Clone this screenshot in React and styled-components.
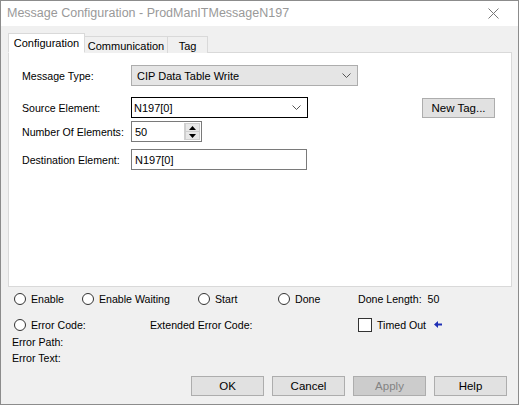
import React from 'react';
import styled, { createGlobalStyle } from 'styled-components';

const GlobalStyle = createGlobalStyle`
  html, body {
    margin: 0;
    padding: 0;
    background: #ffffff;
  }
  body {
    font-family: "Liberation Sans", Arial, sans-serif;
    font-size: 10.6px;
    color: #000;
  }
`;

const Window = styled.div`
  width: 517px;
  height: 403px;
  border: 1px solid #8c8c8c;
  background: #f0f0f0;
  display: flex;
  flex-direction: column;
`;

const TitleBar = styled.div`
  height: 25px;
  background: #ffffff;
  display: flex;
  align-items: center;
  justify-content: space-between;
  padding: 0 19px 0 6px;
`;

const Title = styled.span`
  font-size: 12.5px;
  color: #999999;
  padding-bottom: 2px;
`;

const Body = styled.div`
  flex: 1;
  display: flex;
  flex-direction: column;
  padding: 7px 6px 0 7px;
`;

const TabStrip = styled.div`
  display: flex;
  align-items: flex-end;
  height: 20px;
  position: relative;
  z-index: 1;
`;

const Tab = styled.div`
  width: ${p => p.$w}px;
  height: ${p => (p.$active ? '20px' : '17px')};
  display: flex;
  align-items: center;
  justify-content: center;
  box-sizing: border-box;
  border: 1px solid #d9d9d9;
  border-bottom: ${p => (p.$active ? '1px solid #fff' : 'none')};
  border-left: ${p => (p.$first ? '1px solid #d9d9d9' : 'none')};
  background: ${p => (p.$active ? '#ffffff' : '#f0f0f0')};
  padding-top: ${p => (p.$active ? '0' : '1px')};
  font-size: 11px;
`;

const Panel = styled.div`
  height: 235px;
  border: 1px solid #d9d9d9;
  background: #ffffff;
  margin-top: -1px;
  padding: 12px 0 0 13px;
  box-sizing: border-box;
  display: flex;
  flex-direction: column;
`;

const FormRow = styled.div`
  display: flex;
  align-items: center;
  margin-top: ${p => p.$gap || 0}px;
  height: ${p => p.$h || 21}px;
`;

const Label = styled.span`
  width: 109px;
  flex: none;
`;

const Combo = styled.div`
  width: ${p => p.$w}px;
  height: ${p => p.$h || 21}px;
  box-sizing: border-box;
  border: 1px solid ${p => (p.$focus ? '#000000' : '#adadad')};
  background: ${p => (p.$focus ? '#ffffff' : '#e5e5e5')};
  display: flex;
  align-items: center;
  justify-content: space-between;
  padding: 0 6px 0 ${p => (p.$focus ? '2px' : '5px')};
  font-size: 11px;
`;

const TextField = styled.div`
  width: ${p => p.$w}px;
  height: ${p => p.$h || 21}px;
  box-sizing: border-box;
  border: 1px solid #7a7a7a;
  background: #ffffff;
  display: flex;
  align-items: center;
  padding-left: 3px;
  font-size: 11px;
`;

const Spin = styled.div`
  margin-left: auto;
  width: 15px;
  height: 17px;
  margin-right: 1px;
  display: flex;
  flex-direction: column;
  border-left: 1px solid #d0d0d0;
`;

const SpinHalf = styled.div`
  flex: 1;
  background: #e8e8e8;
  border: 1px solid #cfcfcf;
  display: flex;
  align-items: center;
  justify-content: center;
  & + & { border-top: none; }
`;

const Spacer = styled.div`
  flex: 1;
`;

const Button = styled.div`
  width: ${p => p.$w || 73}px;
  height: ${p => p.$h || 20}px;
  box-sizing: border-box;
  border: 1px solid #adadad;
  background: ${p => (p.$disabled ? '#cccccc' : '#e1e1e1')};
  color: ${p => (p.$disabled ? '#838383' : '#000')};
  display: flex;
  align-items: center;
  justify-content: center;
  font-size: 11.5px;
`;

const Status = styled.div`
  display: grid;
  grid-template-columns: 68px 116px 80px 80px 1fr;
  grid-template-rows: 20px 25px;
  padding-left: 6px;
  margin-top: 2px;
`;

const StatusCell = styled.div`
  display: flex;
  align-items: center;
  grid-column: ${p => p.$col || 'auto'};
  padding-top: ${p => p.$pt || 0}px;
  gap: 5px;
`;

const Radio = styled.span`
  width: 10px;
  height: 10px;
  border-radius: 50%;
  border: 1px solid #333333;
  background: #ffffff;
  flex: none;
`;

const Check = styled.span`
  width: 12px;
  height: 12px;
  border: 1px solid #333333;
  background: #ffffff;
  flex: none;
`;

const Info = styled.div`
  padding-left: 4px;
  display: flex;
  flex-direction: column;
`;

const InfoLine = styled.div`
  height: 16px;
  display: flex;
  align-items: center;
`;

const ButtonRow = styled.div`
  display: flex;
  justify-content: flex-end;
  gap: 8px;
  padding-right: 5px;
  margin-top: 10px;
`;

const Chevron = () => (
  <svg width="9" height="5" viewBox="0 0 9 5">
    <path d="M0.5 0.5 L4.5 4.5 L8.5 0.5" fill="none" stroke="#555" strokeWidth="1" />
  </svg>
);

const CloseIcon = () => (
  <svg width="11" height="11" viewBox="0 0 11 11">
    <path d="M0.5 0.5 L10.5 10.5 M10.5 0.5 L0.5 10.5" stroke="#777" strokeWidth="1" />
  </svg>
);

const Tri = ({ up }) => (
  <svg width="7" height="4" viewBox="0 0 7 4">
    <path d={up ? 'M0 4 L3.5 0 L7 4 Z' : 'M0 0 L3.5 4 L7 0 Z'} fill="#000" />
  </svg>
);

const ArrowLeft = () => (
  <svg width="8" height="7" viewBox="0 0 8 7">
    <path d="M0 3.5 L4 0 L4 2.5 L8 2.5 L8 4.5 L4 4.5 L4 7 Z" fill="#1f2fb5" />
  </svg>
);

export default function App() {
  return (
    <>
      <GlobalStyle />
      <Window>
        <TitleBar>
          <Title>Message Configuration - ProdManITMessageN197</Title>
          <CloseIcon />
        </TitleBar>
        <Body>
          <TabStrip>
            <Tab $active $first $w={77}>Configuration</Tab>
            <Tab $w={83}>Communication</Tab>
            <Tab $w={40}>Tag</Tab>
          </TabStrip>
          <Panel>
            <FormRow>
              <Label>Message Type:</Label>
              <Combo $w={227}>
                <span>CIP Data Table Write</span>
                <Chevron />
              </Combo>
            </FormRow>
            <FormRow $gap={11}>
              <Label>Source Element:</Label>
              <Combo $w={177} $focus>
                <span>N197[0]</span>
                <Chevron />
              </Combo>
              <Spacer />
              <Button $w={73} style={{ marginRight: 16 }}>New Tag...</Button>
            </FormRow>
            <FormRow $gap={3}>
              <Label>Number Of Elements:</Label>
              <TextField $w={71}>
                <span>50</span>
                <Spin>
                  <SpinHalf><Tri up /></SpinHalf>
                  <SpinHalf><Tri /></SpinHalf>
                </Spin>
              </TextField>
            </FormRow>
            <FormRow $gap={7}>
              <Label>Destination Element:</Label>
              <TextField $w={176}>N197[0]</TextField>
            </FormRow>
          </Panel>
          <Status>
            <StatusCell><Radio />Enable</StatusCell>
            <StatusCell><Radio />Enable Waiting</StatusCell>
            <StatusCell><Radio />Start</StatusCell>
            <StatusCell><Radio />Done</StatusCell>
            <StatusCell>Done Length:&nbsp;&nbsp;50</StatusCell>
            <StatusCell $pt={6} $col="1 / 3"><Radio />Error Code:</StatusCell>
            <StatusCell $pt={6} $col="3 / 5" style={{ marginLeft: -48 }}>Extended Error Code:</StatusCell>
            <StatusCell $pt={6}><Check />Timed Out&nbsp;<ArrowLeft /></StatusCell>
          </Status>
          <Info>
            <InfoLine>Error Path:</InfoLine>
            <InfoLine>Error Text:</InfoLine>
          </Info>
          <ButtonRow>
            <Button>OK</Button>
            <Button>Cancel</Button>
            <Button $disabled>Apply</Button>
            <Button>Help</Button>
          </ButtonRow>
        </Body>
      </Window>
    </>
  );
}
